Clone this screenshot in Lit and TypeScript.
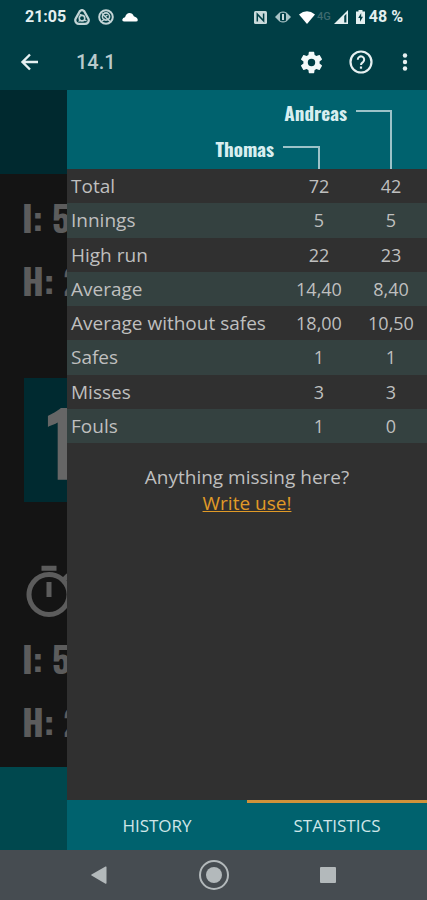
import { LitElement, html, css } from "lit";
import { customElement, state } from "lit/decorators.js";
import { classMap } from "lit/directives/class-map.js";

const players = ["Thomas", "Andreas"];

const stats: [string, string, string][] = [
  ["Total", "72", "42"],
  ["Innings", "5", "5"],
  ["High run", "22", "23"],
  ["Average", "14,40", "8,40"],
  ["Average without safes", "18,00", "10,50"],
  ["Safes", "1", "1"],
  ["Misses", "3", "3"],
  ["Fouls", "1", "0"],
];

const reset = css`
  * {
    box-sizing: border-box;
  }
  svg {
    display: block;
    flex: none;
  }
  button {
    border: 0;
    padding: 0;
    margin: 0;
    background: none;
    color: inherit;
    font: inherit;
    cursor: pointer;
  }
`;

@customElement("status-bar")
class StatusBar extends LitElement {
  static styles = [
    reset,
    css`
      :host {
        display: flex;
        align-items: center;
        justify-content: space-between;
        height: 34px;
        padding: 0 24px 0 25px;
        color: #e4eff0;
        font: 700 16px/20px Roboto, sans-serif;
      }
      .side {
        display: flex;
        align-items: center;
      }
      .left {
        gap: 8px;
      }
      .right {
        gap: 8px;
      }
      .signal {
        display: flex;
        align-items: center;
        gap: 3px;
        margin-left: -6px;
      }
      .dim {
        color: #3f6a70;
        font-size: 11px;
        font-weight: 500;
        line-height: 12px;
      }
      .battery {
        display: flex;
        align-items: center;
        gap: 4px;
      }
    `,
  ];

  render() {
    return html`
      <div class="side left">
        <span>21:05</span>
        <svg width="16" height="16" viewBox="0 0 14 14" fill="none" stroke="#c3d5d7" stroke-width="2">
          <path d="M5.200 1.800Q7 .2 8.800 1.800L12.600 8.500Q13.400 10.200 12 12Q11.200 13 9.500 13H4.500Q2.800 13 2 12Q.6 10.200 1.400 8.500Z" />
          <circle cx="7" cy="8" r="2.400" stroke-width="1.400" />
          <path d="M5 4.500l2 1M4 11l2-1.500M9 9.500l2 1" stroke-width="1" />
        </svg>
        <svg width="16" height="16" viewBox="0 0 16 16" fill="none" stroke="#c3d5d7">
          <circle cx="8" cy="8" r="6.800" stroke-width="2" />
          <circle cx="8" cy="7.500" r="3.600" stroke-width="1.600" />
          <path d="M4 4.500l8 8M6.500 8l3-2M4 12l3-2" stroke-width="1.500" />
        </svg>
        <svg width="16" height="10" viewBox="0 0 16 10" fill="#fff">
          <path d="M2 9.500Q0 9.500 .3 7.500Q.8 5.800 3 5.200Q4.500 1 7.500 1Q10.500 1 11.800 4.300Q15.500 5.500 15.800 8Q15.800 9.500 14 9.500Z" />
        </svg>
      </div>
      <div class="side right">
        <svg width="13" height="13" viewBox="0 0 13 13">
          <rect width="13" height="13" rx="1.500" fill="#c9dadb" />
          <path d="M3.300 10.500V3.200l6.300 6.600V2.500" fill="none" stroke="#003e45" stroke-width="1.500" />
        </svg>
        <svg width="16" height="12" viewBox="0 0 16 12">
          <path d="M0 6L4.500 1.500Q8-.6 11.500 1.500L16 6L11.500 10.500Q8 12.600 4.500 10.500Z" fill="#a9c3c6" />
          <rect x="5" y="1.800" width="6" height="8.400" rx="1.500" fill="#003e45" />
          <rect x="7" y="3" width="2" height="6" fill="#c9dadb" />
        </svg>
        <svg width="16" height="13" viewBox="0 0 16 13" fill="#fff">
          <path d="M0 3.500Q8-3 16 3.500L8 13Z" />
        </svg>
        <span class="signal">
          <span class="dim">4G</span>
          <svg width="14" height="14" viewBox="0 0 13 13">
            <path d="M0 13L13 0V13Z" fill="#e4eff0" />
            <path d="M9.500 5.500L11.500 3.500V11.500H9.500Z" fill="#003e45" />
          </svg>
        </span>
        <span class="battery">
          <svg width="9" height="14" viewBox="0 0 9 14">
            <path d="M2.500 0h4v1.500H9V14H0V1.500h2.500Z" fill="#e4eff0" />
            <path d="M5.200 3L2.200 8H4v3.800L7 6.800H5.200Z" fill="#003e45" />
          </svg>
          <span>48 %</span>
        </span>
      </div>
    `;
  }
}

@customElement("app-bar")
class AppBar extends LitElement {
  static styles = [
    reset,
    css`
      :host {
        display: flex;
        align-items: center;
        height: 56px;
        padding: 0 10px 0 18px;
        color: #e6f0f1;
      }
      .title {
        flex: 1;
        margin: 0 0 0 34px;
        color: #b9cacc;
        font: 500 20px/28px Roboto, sans-serif;
      }
      .actions {
        display: flex;
        align-items: center;
        gap: 24px;
      }
      .more {
        margin-left: -4px;
      }
    `,
  ];

  render() {
    return html`
      <button aria-label="Back">
        <svg width="24" height="24" viewBox="0 0 24 24" fill="none" stroke="currentColor" stroke-width="2.400">
          <path d="M20 12H5M12 4.500L4.500 12L12 19.500" />
        </svg>
      </button>
      <h1 class="title">14.1</h1>
      <div class="actions">
        <button aria-label="Settings">
          <svg width="27" height="27" viewBox="0 0 24 24" fill="#f4fafa">
            <path
              d="M19.140 12.940c.04-.3.060-.610.060-.940 0-.320-.020-.640-.070-.940l2.030-1.580c.180-.140.230-.410.120-.610l-1.920-3.320c-.120-.220-.370-.290-.590-.220l-2.390.960c-.5-.380-1.030-.7-1.620-.940L14.400 2.810c-.040-.240-.240-.410-.480-.410h-3.840c-.240 0-.430.170-.470.410L9.250 5.350c-.590.240-1.130.570-1.620.940L5.240 5.330c-.220-.080-.470 0-.590.220L2.740 8.870c-.120.210-.080.470.120.610l2.030 1.580c-.050.300-.090.630-.090.940s.020.640.070.940l-2.030 1.580c-.180.140-.230.410-.120.610l1.920 3.320c.120.220.370.290.590.220l2.390-.960c.5.380 1.030.7 1.620.940l.360 2.540c.050.240.240.410.480.410h3.840c.240 0 .440-.170.470-.410l.360-2.540c.590-.240 1.130-.560 1.620-.940l2.390.960c.220.080.470 0 .590-.220l1.920-3.320c.120-.220.070-.470-.120-.610ZM12 15.300a3.300 3.300 0 1 1 0-6.600a3.300 3.300 0 0 1 0 6.600Z"
            />
          </svg>
        </button>
        <button aria-label="Help">
          <svg width="24" height="24" viewBox="1 1 24 24" fill="none" stroke="currentColor">
            <circle cx="13" cy="13" r="10.500" stroke-width="2.200" />
            <path d="M9.800 10.800a3.200 3.200 0 1 1 5.200 2.300c-1.200.9-2 1.300-2 2.900" stroke-width="2" />
            <path d="M13 17.500v2.200" stroke-width="2.200" />
          </svg>
        </button>
        <button class="more" aria-label="More options">
          <svg width="24" height="24" viewBox="0 0 24 24" fill="currentColor">
            <circle cx="12" cy="5.500" r="2.200" />
            <circle cx="12" cy="12" r="2.200" />
            <circle cx="12" cy="18.500" r="2.200" />
          </svg>
        </button>
      </div>
    `;
  }
}

@customElement("score-board")
class ScoreBoard extends LitElement {
  static styles = [
    reset,
    css`
      :host {
        display: flex;
        flex-direction: column;
        overflow: hidden;
        background: #141414;
        color: #5c5c5c;
        font: 700 36px/63px Oswald, "Liberation Sans Narrow", "Liberation Sans", sans-serif;
        white-space: nowrap;
      }
      .top {
        height: 84px;
        background: #00292f;
      }
      .body {
        flex: 1;
        display: flex;
        flex-direction: column;
        padding: 11px 22px;
      }
      .line {
        margin: 0;
      }
      .score {
        height: 124px;
        margin: 67px 0 60px 2px;
        padding-left: 22px;
        background: #002a30;
        color: #666;
        font-size: 88px;
        line-height: 124px;
      }
      .timer {
        margin: 0 0 4px -3px;
      }
      .bottom {
        height: 83px;
        background: #00484e;
      }
    `,
  ];

  render() {
    return html`
      <div class="top"></div>
      <div class="body">
        <p class="line">I: 5</p>
        <p class="line">H: 22</p>
        <div class="score">14</div>
        <svg class="timer" width="60" height="60" viewBox="0 0 24 24" fill="currentColor">
          <path
            d="M15 1.500H9v2h6v-2zm-4 12.500h2V8h-2v6zm8.030-6.610l1.420-1.420c-.430-.510-.9-.990-1.410-1.410l-1.420 1.420A8.960 8.960 0 0 0 12 4a9 9 0 1 0 7.030 3.390zM12 20a7 7 0 1 1 0-14a7 7 0 0 1 0 14z"
          />
        </svg>
        <p class="line">I: 5</p>
        <p class="line">H: 23</p>
      </div>
      <div class="bottom"></div>
    `;
  }
}

@customElement("stats-drawer")
class StatsDrawer extends LitElement {
  @state() private tab = "STATISTICS";

  static styles = [
    reset,
    css`
      :host {
        display: flex;
        flex-direction: column;
        background: #303030;
        color: #bfbfbf;
        font: 19px/26px "Open Sans", "Noto Sans", sans-serif;
      }
      .players {
        display: grid;
        grid-template-columns: 1fr 37px 36px 36px 35px;
        grid-template-rows: 36px 38px;
        padding-top: 5px;
        background: #00626e;
        color: #d8eef0;
        font: 700 19px/34px Oswald, "Liberation Sans Narrow", "Liberation Sans", sans-serif;
        text-align: right;
      }
      .name {
        padding-right: 9px;
      }
      .second {
        grid-area: 1 / 1 / 2 / 4;
      }
      .first {
        grid-area: 2 / 1 / 3 / 2;
      }
      .connector {
        margin-top: 15px;
        border: solid #9cc3c8;
        border-width: 2px 2px 0 0;
      }
      .to-second {
        grid-area: 1 / 4 / 3 / 5;
      }
      .to-first {
        grid-area: 2 / 2 / 3 / 3;
      }
      .stats {
        width: 100%;
        height: 274px;
        border-collapse: collapse;
        table-layout: fixed;
      }
      .row:nth-child(even) {
        background: #344140;
      }
      .label {
        padding: 0 0 0 4px;
        font-weight: 400;
        text-align: left;
      }
      .value {
        width: 72px;
        padding: 0;
        font-size: 18px;
        text-align: center;
      }
      .missing {
        flex: 1;
        margin: 0;
        padding-top: 21px;
        text-align: center;
      }
      .link {
        color: #e09a27;
      }
      .tabs {
        display: grid;
        grid-template-columns: 1fr 1fr;
        height: 50px;
        background: #00626e;
      }
      .tab {
        padding-bottom: 2px;
        border-top: 3px solid #00626e;
        color: #cfe6e8;
        font-size: 17px;
      }
      .active {
        border-top-color: #d0923a;
      }
    `,
  ];

  render() {
    return html`
      <div class="players">
        <span class="name second">${players[1]}</span>
        <span class="connector to-second"></span>
        <span class="name first">${players[0]}</span>
        <span class="connector to-first"></span>
      </div>
      <table class="stats" aria-label="Statistics">
        <tbody>
          ${stats.map(
            ([label, a, b]) => html`
              <tr class="row">
                <th class="label" scope="row">${label}</th>
                <td class="value">${a}</td>
                <td class="value">${b}</td>
              </tr>
            `
          )}
        </tbody>
      </table>
      <p class="missing">
        Anything missing here?<br />
        <a class="link" href="#feedback">Write use!</a>
      </p>
      <div class="tabs" role="tablist">
        ${["HISTORY", "STATISTICS"].map(
          (name) => html`
            <button
              class=${classMap({ tab: true, active: name === this.tab })}
              role="tab"
              aria-selected=${name === this.tab}
              @click=${() => (this.tab = name)}
            >
              ${name}
            </button>
          `
        )}
      </div>
    `;
  }
}

@customElement("system-nav")
class SystemNav extends LitElement {
  static styles = [
    reset,
    css`
      :host {
        display: flex;
        align-items: center;
        justify-content: space-evenly;
        height: 50px;
        background: #464c51;
        color: #b3b9bb;
      }
    `,
  ];

  render() {
    return html`
      <button aria-label="Back">
        <svg width="32" height="32" viewBox="0 0 32 32" fill="currentColor">
          <path d="M22.500 7.500q1-.4 1 .6v16q0 1-1 .6L8.500 16.500q-.7-.5 0-1Z" />
        </svg>
      </button>
      <button aria-label="Home">
        <svg width="32" height="32" viewBox="0 0 32 32">
          <circle cx="16" cy="16" r="14" fill="none" stroke="currentColor" stroke-width="2" />
          <circle cx="16" cy="16" r="8" fill="currentColor" />
        </svg>
      </button>
      <button aria-label="Recent apps">
        <svg width="32" height="32" viewBox="0 0 32 32" fill="currentColor">
          <rect x="8" y="8" width="16" height="16" rx="1" />
        </svg>
      </button>
    `;
  }
}

@customElement("app-root")
class AppRoot extends LitElement {
  static styles = [
    reset,
    css`
      :host {
        display: flex;
        flex-direction: column;
        min-height: 100vh;
        background: #003e45;
      }
      .content {
        position: relative;
        flex: 1;
        display: flex;
      }
      .board {
        flex: 1;
        min-width: 0;
      }
      .drawer {
        position: absolute;
        top: 0;
        right: 0;
        bottom: 0;
        left: 67px;
      }
    `,
  ];

  render() {
    return html`
      <status-bar></status-bar>
      <app-bar></app-bar>
      <main class="content">
        <score-board class="board"></score-board>
        <stats-drawer class="drawer"></stats-drawer>
      </main>
      <system-nav></system-nav>
    `;
  }
}
